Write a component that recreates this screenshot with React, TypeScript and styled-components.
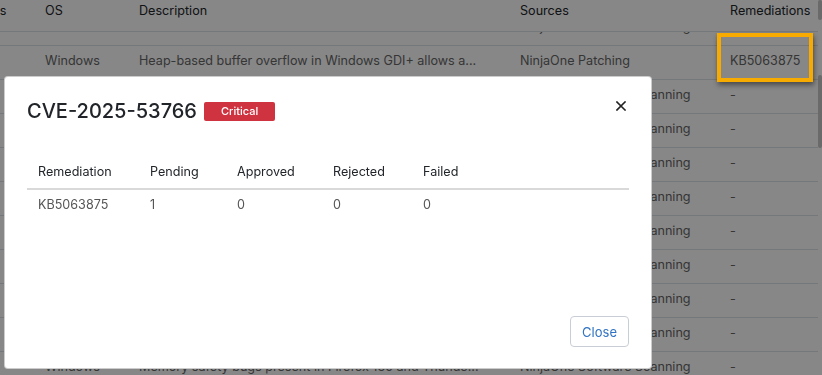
import React, { useLayoutEffect, useRef } from 'react';
import styled, { createGlobalStyle } from 'styled-components';

interface Finding {
  device: string;
  os: string;
  description: string;
  source: string;
  remediation: string;
}

interface RemediationStatus {
  remediation: string;
  pending: number;
  approved: number;
  rejected: number;
  failed: number;
}

const findings: Finding[] = [
  { device: '3', os: 'Windows', description: 'Use after free in Chromium Media allows a remote attacker...', source: 'NinjaOne Software Scanning', remediation: '-' },
  { device: '1', os: 'Windows', description: 'Heap-based buffer overflow in Windows GDI+ allows a...', source: 'NinjaOne Patching', remediation: 'KB5063875' },
  { device: '2', os: 'Windows', description: 'Out of bounds write in V8 in Google Chrome prior to...', source: 'NinjaOne Software Scanning', remediation: '-' },
  { device: '2', os: 'Windows', description: 'Inappropriate implementation in Extensions in Google...', source: 'NinjaOne Software Scanning', remediation: '-' },
  { device: '2', os: 'Windows', description: 'Type Confusion in V8 in Google Chrome prior to 138...', source: 'NinjaOne Software Scanning', remediation: '-' },
  { device: '1', os: 'Windows', description: 'Integer overflow in Skia in Google Chrome prior to...', source: 'NinjaOne Software Scanning', remediation: '-' },
  { device: '1', os: 'Windows', description: 'Use after free in Mozilla Firefox and Thunderbird...', source: 'NinjaOne Software Scanning', remediation: '-' },
  { device: '1', os: 'Windows', description: 'Insufficient validation of untrusted input in Mojo...', source: 'NinjaOne Software Scanning', remediation: '-' },
  { device: '1', os: 'Windows', description: 'Spoofing issue in the Firefox address bar allows a...', source: 'NinjaOne Software Scanning', remediation: '-' },
  { device: '1', os: 'Windows', description: 'Policy bypass in Loader in Google Chrome prior to...', source: 'NinjaOne Software Scanning', remediation: '-' },
  { device: '1', os: 'Windows', description: 'Memory safety bugs present in Firefox 135 and Thunde...', source: 'NinjaOne Software Scanning', remediation: '-' },
  { device: '1', os: 'Windows', description: 'Out of bounds read in Angle in Google Chrome prior to...', source: 'NinjaOne Software Scanning', remediation: '-' },
  { device: '1', os: 'Windows', description: 'Race condition in Windows Kernel allows an authorized...', source: 'NinjaOne Patching', remediation: '-' },
  { device: '1', os: 'Windows', description: 'Incorrect security UI in Downloads in Google Chrome...', source: 'NinjaOne Software Scanning', remediation: '-' },
];

const statuses: RemediationStatus[] = [
  { remediation: 'KB5063875', pending: 1, approved: 0, rejected: 0, failed: 0 },
];

const GlobalStyle = createGlobalStyle`
  html, body {
    margin: 0;
    padding: 0;
  }

  body {
    font-family: Inter, "Noto Sans", sans-serif;
    background: #fff;
    color: #212529;
    overflow: hidden;
  }

  * {
    box-sizing: border-box;
  }
`;

const Page = styled.div`
  position: relative;
  width: 100vw;
  height: 100vh;
  overflow: hidden;
`;

const TableScroller = styled.div`
  width: calc(100% - 4px);
  height: 100%;
  overflow: hidden;
`;

const FindingsTable = styled.table`
  width: 871px;
  table-layout: fixed;
  border-collapse: separate;
  border-spacing: 0;
  font-size: 12.6px;
`;

const HeadCell = styled.th`
  position: sticky;
  top: 0;
  z-index: 1;
  background: #fff;
  text-align: left;
  font-weight: 400;
  color: #212529;
  padding: 3px 12px 12px;
  line-height: 16px;
  border-bottom: 1px solid #dee2e6;
  white-space: nowrap;
`;

const Cell = styled.td`
  padding: 7px 12px 10px;
  line-height: 16px;
  color: #666;
  border-bottom: 1px solid #dee2e6;
  white-space: nowrap;
  overflow: hidden;
`;

const ScrollThumb = styled.div<{ $top: number; $height: number }>`
  position: absolute;
  right: 0;
  top: ${({ $top }) => $top}px;
  width: 4px;
  height: ${({ $height }) => $height}px;
  background: #c8c8c8;
  border-radius: 2px;
`;

const Backdrop = styled.div`
  position: fixed;
  inset: 0;
  background: rgba(0, 0, 0, 0.47);
  z-index: 10;
`;

const Highlight = styled.div`
  position: absolute;
  left: 717px;
  top: 33px;
  width: 96px;
  height: 49px;
  border: 4px solid #f7aa00;
  box-shadow: 1px 3px 5px rgba(0, 0, 0, 0.45);
  z-index: 30;
`;

const Dialog = styled.div`
  position: fixed;
  top: 76px;
  left: 4px;
  width: 648px;
  height: 293px;
  display: flex;
  flex-direction: column;
  padding: 19px 22px 21px;
  background: #fff;
  border: 1px solid rgba(0, 0, 0, 0.2);
  border-radius: 4px;
  z-index: 20;
`;

const DialogHeader = styled.div`
  display: flex;
  align-items: center;
  gap: 7px;
`;

const DialogTitle = styled.h5`
  margin: 0;
  font-size: 20px;
  font-weight: 500;
  line-height: 30px;
  color: #212529;
`;

const SeverityBadge = styled.span`
  padding: 3px 17px;
  border-radius: 2px;
  background: #cf3340;
  color: #fff;
  font-size: 11px;
  font-weight: 500;
  line-height: 13px;
`;

const CloseIcon = styled.button`
  align-self: flex-start;
  margin-left: auto;
  margin-right: -2px;
  width: 20px;
  height: 20px;
  padding: 0;
  border: none;
  background: none;
  display: flex;
  align-items: center;
  justify-content: center;
  cursor: pointer;
`;

const DialogBody = styled.div`
  flex: 1;
  margin-top: 29px;
`;

const StatusTable = styled.table`
  width: 100%;
  table-layout: fixed;
  border-collapse: collapse;
  font-size: 12.6px;
`;

const StatusHead = styled.th`
  text-align: left;
  font-weight: 400;
  color: #212529;
  padding: 9px 11px 8px;
  line-height: 16px;
  border-bottom: 2px solid #d9d9d9;
`;

const StatusCell = styled.td`
  padding: 7px 11px;
  line-height: 16px;
  color: #555;
`;

const DialogFooter = styled.div`
  display: flex;
  justify-content: flex-end;
`;

const CloseButton = styled.button`
  height: 31px;
  padding: 0 11px;
  border: 1px solid #c9ced6;
  border-radius: 4px;
  background: #fff;
  color: #2f73c4;
  font-family: Inter, "Noto Sans", sans-serif;
  font-size: 13px;
  cursor: pointer;
`;

const App: React.FC = () => {
  const scrollerRef = useRef<HTMLDivElement>(null);

  useLayoutEffect(() => {
    if (scrollerRef.current) {
      scrollerRef.current.scrollTop = 20;
      scrollerRef.current.scrollLeft = 53;
    }
  }, []);

  return (
    <Page>
      <GlobalStyle />
      <TableScroller ref={scrollerRef}>
        <FindingsTable>
          <colgroup>
            <col style={{ width: 86 }} />
            <col style={{ width: 94 }} />
            <col style={{ width: 381 }} />
            <col style={{ width: 210 }} />
            <col style={{ width: 100 }} />
          </colgroup>
          <thead>
            <tr>
              <HeadCell>Devices</HeadCell>
              <HeadCell>OS</HeadCell>
              <HeadCell>Description</HeadCell>
              <HeadCell>Sources</HeadCell>
              <HeadCell>Remediations</HeadCell>
            </tr>
          </thead>
          <tbody>
            {findings.map((f, i) => (
              <tr key={i}>
                <Cell>{f.device}</Cell>
                <Cell>{f.os}</Cell>
                <Cell>{f.description}</Cell>
                <Cell>{f.source}</Cell>
                <Cell>{f.remediation}</Cell>
              </tr>
            ))}
          </tbody>
        </FindingsTable>
      </TableScroller>
      <ScrollThumb $top={0} $height={20} />
      <ScrollThumb $top={75} $height={73} />

      <Backdrop />
      <Highlight />

      <Dialog role="dialog">
        <DialogHeader>
          <DialogTitle>CVE-2025-53766</DialogTitle>
          <SeverityBadge>Critical</SeverityBadge>
          <CloseIcon aria-label="Close">
            <svg width="10" height="10" viewBox="0 0 10 10">
              <path d="M1 1L9 9M9 1L1 9" stroke="#222" strokeWidth="1.6" strokeLinecap="square" />
            </svg>
          </CloseIcon>
        </DialogHeader>
        <DialogBody>
          <StatusTable>
            <colgroup>
              <col style={{ width: 112 }} />
              <col style={{ width: 87 }} />
              <col style={{ width: 96 }} />
              <col style={{ width: 90 }} />
              <col />
            </colgroup>
            <thead>
              <tr>
                <StatusHead>Remediation</StatusHead>
                <StatusHead>Pending</StatusHead>
                <StatusHead>Approved</StatusHead>
                <StatusHead>Rejected</StatusHead>
                <StatusHead>Failed</StatusHead>
              </tr>
            </thead>
            <tbody>
              {statuses.map((s) => (
                <tr key={s.remediation}>
                  <StatusCell>{s.remediation}</StatusCell>
                  <StatusCell>{s.pending}</StatusCell>
                  <StatusCell>{s.approved}</StatusCell>
                  <StatusCell>{s.rejected}</StatusCell>
                  <StatusCell>{s.failed}</StatusCell>
                </tr>
              ))}
            </tbody>
          </StatusTable>
        </DialogBody>
        <DialogFooter>
          <CloseButton>Close</CloseButton>
        </DialogFooter>
      </Dialog>
    </Page>
  );
};

export default App;
